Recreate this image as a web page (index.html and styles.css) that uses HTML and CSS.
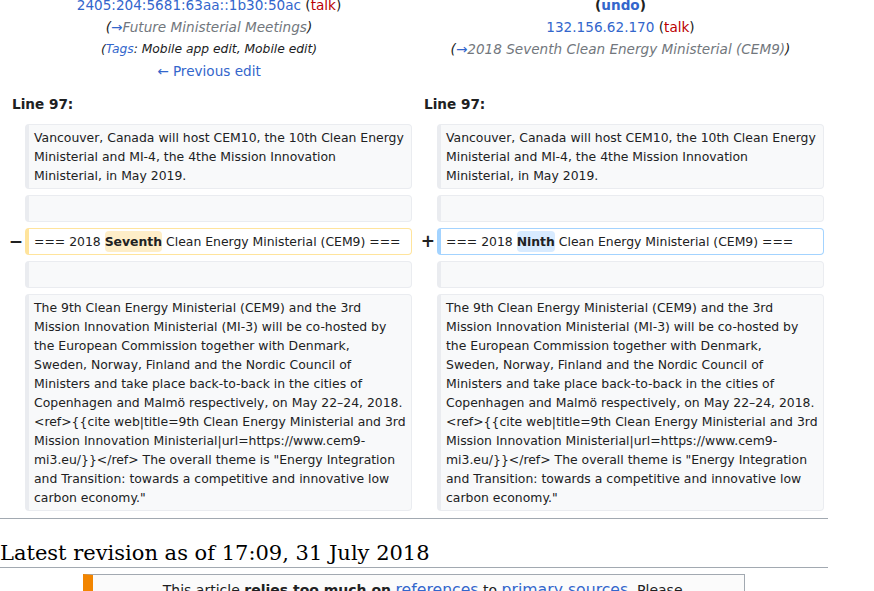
FILE: index.html
```html
<!DOCTYPE html>
<html lang="en">
<head>
<meta charset="utf-8">
<title>Diff</title>
<link rel="stylesheet" href="styles.css">
</head>
<body>
<div class="page">
  <div class="diff-header">
    <div class="rev-col">
      <div class="rev-line"><a class="link" href="#">2405:204:5681:63aa::1b30:50ac</a> (<a class="new" href="#">talk</a>)</div>
      <div class="rev-line comment">(<a class="link" href="#">→</a><span class="autocomment">Future Ministerial Meetings</span>)</div>
      <div class="rev-line tags">(<a class="link" href="#">Tags</a>: Mobile app edit, Mobile edit)</div>
      <div class="rev-line"><a class="link" href="#">← Previous edit</a></div>
    </div>
    <div class="rev-col">
      <div class="rev-line undo">(<a class="link" href="#">undo</a>)</div>
      <div class="rev-line"><a class="link" href="#">132.156.62.170</a> (<a class="new" href="#">talk</a>)</div>
      <div class="rev-line comment">(<a class="link" href="#">→</a><span class="autocomment">2018 Seventh Clean Energy Ministerial (CEM9)</span>)</div>
    </div>
  </div>

  <div class="lineno-row">
    <div class="lineno">Line 97:</div>
    <div class="lineno">Line 97:</div>
  </div>

  <div class="diff-grid">
    <div class="marker"></div>
    <div class="cell context">Vancouver, Canada will host CEM10, the 10th Clean Energy Ministerial and MI-4, the 4the Mission Innovation Ministerial, in May 2019.</div>
    <div class="marker"></div>
    <div class="cell context">Vancouver, Canada will host CEM10, the 10th Clean Energy Ministerial and MI-4, the 4the Mission Innovation Ministerial, in May 2019.</div>

    <div class="marker"></div>
    <div class="cell context"><br></div>
    <div class="marker"></div>
    <div class="cell context"><br></div>

    <div class="marker">−</div>
    <div class="cell deleted">=== 2018 <del class="change">Seventh</del> Clean Energy Ministerial (CEM9) ===</div>
    <div class="marker">+</div>
    <div class="cell added">=== 2018 <ins class="change">Ninth</ins> Clean Energy Ministerial (CEM9) ===</div>

    <div class="marker"></div>
    <div class="cell context"><br></div>
    <div class="marker"></div>
    <div class="cell context"><br></div>

    <div class="marker"></div>
    <div class="cell context">The 9th Clean Energy Ministerial (CEM9) and the 3rd Mission Innovation Ministerial (MI-3) will be co-hosted by the European Commission together with Denmark, Sweden, Norway, Finland and the Nordic Council of Ministers and take place back-to-back in the cities of Copenhagen and Malmö respectively, on May 22–24, 2018. &lt;ref&gt;{{cite web|title=9th Clean Energy Ministerial and 3rd Mission Innovation Ministerial|url=https://www.cem9-mi3.eu/}}&lt;/ref&gt; The overall theme is "Energy Integration and Transition: towards a competitive and innovative low carbon economy."</div>
    <div class="marker"></div>
    <div class="cell context">The 9th Clean Energy Ministerial (CEM9) and the 3rd Mission Innovation Ministerial (MI-3) will be co-hosted by the European Commission together with Denmark, Sweden, Norway, Finland and the Nordic Council of Ministers and take place back-to-back in the cities of Copenhagen and Malmö respectively, on May 22–24, 2018. &lt;ref&gt;{{cite web|title=9th Clean Energy Ministerial and 3rd Mission Innovation Ministerial|url=https://www.cem9-mi3.eu/}}&lt;/ref&gt; The overall theme is "Energy Integration and Transition: towards a competitive and innovative low carbon economy."</div>
  </div>

  <hr class="diff-hr">

  <h2 class="revision-title">Latest revision as of 17:09, 31 July 2018</h2>

  <div class="ambox">
    <div class="ambox-image"></div>
    <div class="ambox-text">This article <b>relies too much on</b> <a class="link ambox-link" href="#">references</a> to <a class="link ambox-link" href="#">primary sources</a>. Please improve this by adding secondary or tertiary sources.</div>
  </div>
</div>
</body>
</html>
```

FILE: styles.css
```css
html, body {
  margin: 0;
  padding: 0;
  background: #ffffff;
}

body {
  font-family: "DejaVu Sans", sans-serif;
  font-size: 13.6px;
  color: #202122;
  overflow: hidden;
}

.page {
  width: 828px;
  margin-top: -6.5px;
}

a {
  text-decoration: none;
}

.link {
  color: #3366cc;
}

.new {
  color: #ba0000;
}

/* header */
.diff-header {
  display: grid;
  grid-template-columns: 418px 405px;
}

.rev-col {
  text-align: center;
}

.rev-line {
  line-height: 22px;
  white-space: nowrap;
}

.comment {
  font-style: italic;
}

.autocomment {
  color: #72777d;
}

.tags {
  font-style: italic;
  font-size: 12.3px;
}

.undo {
  font-weight: bold;
}

/* line numbers */
.lineno-row {
  display: grid;
  grid-template-columns: 412px 412px;
  padding: 11px 0 9.5px;
}

.lineno {
  font-weight: bold;
  line-height: 22px;
  padding-left: 12px;
}

/* diff grid */
.diff-grid {
  display: grid;
  grid-template-columns: 25px 387px 25px 387px;
  row-gap: 6px;
  font-size: 12.42px;
  line-height: 19px;
}

.marker {
  display: flex;
  align-items: center;
  justify-content: flex-end;
  padding-right: 2px;
  font-size: 17px;
  font-weight: bold;
  line-height: 1;
  color: #202122;
}

.cell {
  border-style: solid;
  border-width: 1px 1px 1px 4px;
  border-radius: 4px;
  padding: 2.5px 5px 3.5px 5px;
  overflow-wrap: break-word;
}

.context {
  background: #f8f9fa;
  border-color: #eaecf0;
  color: #202122;
}

.deleted {
  background: #ffffff;
  border-color: #ffe49c;
}

.added {
  background: #ffffff;
  border-color: #a3d3ff;
}

.change {
  font-weight: bold;
  text-decoration: none;
  border-radius: 4px;
  padding: 3px 0;
}

.deleted .change {
  background: #feeec8;
}

.added .change {
  background: #d8ebff;
}

/* lower part */
.diff-hr {
  border: 0;
  border-top: 1px solid #a2a9b1;
  height: 0;
  margin: 7px 0 0;
}

.revision-title {
  font-family: "DejaVu Serif", serif;
  font-weight: normal;
  font-size: 21px;
  line-height: 27.3px;
  margin: 21px 0 0;
  padding: 0;
  border-bottom: 1px solid #a2a9b1;
  color: #000000;
}

.ambox {
  display: flex;
  margin: 6px 10% 0;
  border: 1px solid #a2a9b1;
  border-left: 10px solid #f28500;
  background: #fbfbfb;
}

.ambox-image {
  flex: 0 0 63px;
}

.ambox-text {
  flex: 1;
  padding: 4px 7px;
  font-size: 14px;
  line-height: 22px;
}

.ambox-link {
  font-size: 15.7px;
}
```
